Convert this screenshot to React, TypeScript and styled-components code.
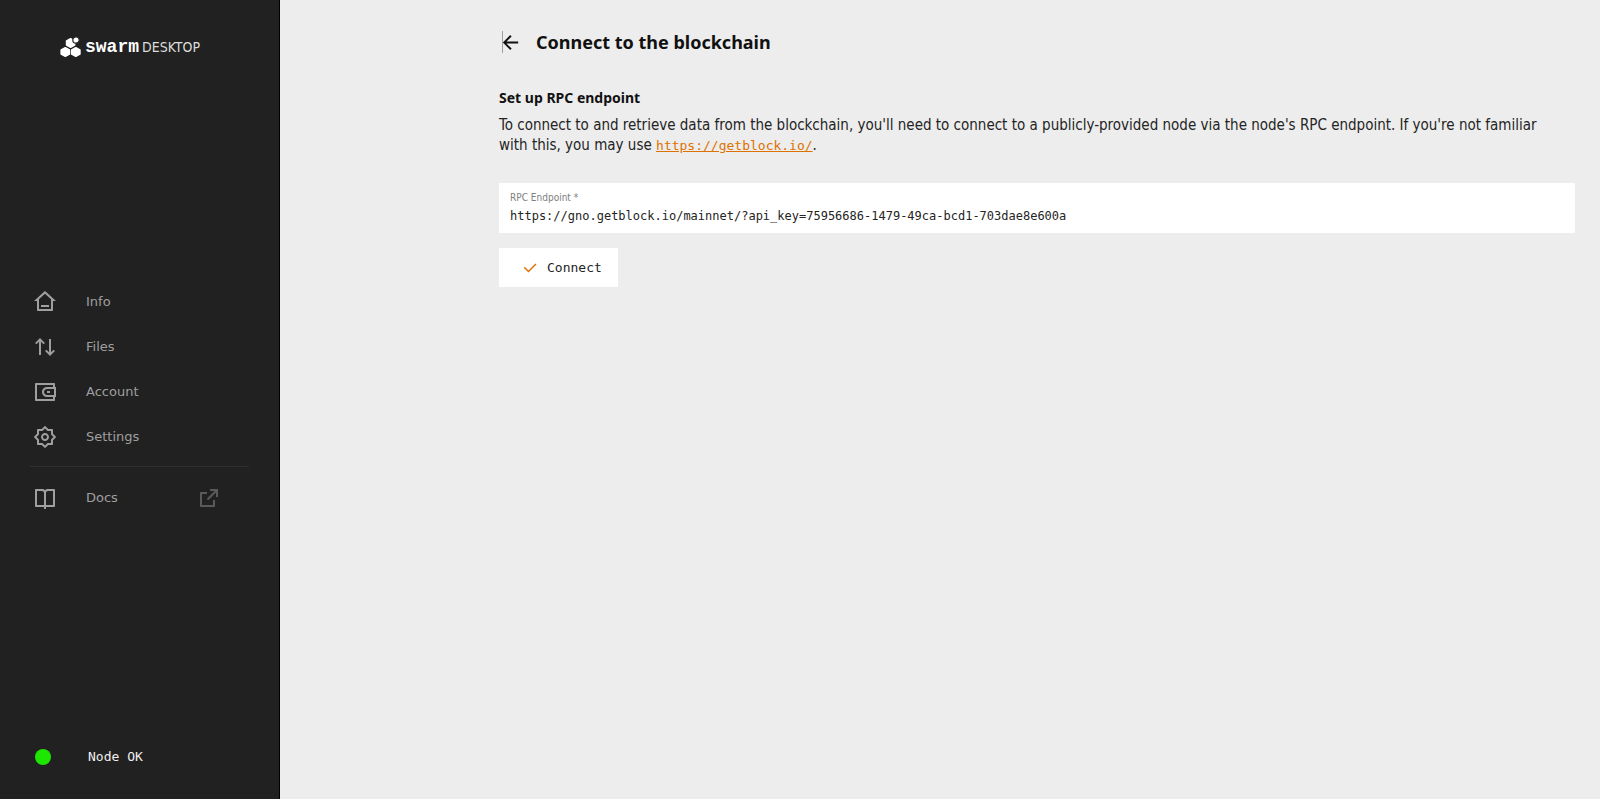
import React from 'react';
import styled, { createGlobalStyle } from 'styled-components';
import {
  RiHome3Line,
  RiArrowUpDownLine,
  RiWallet3Line,
  RiSettings2Line,
  RiBookOpenLine,
  RiExternalLinkLine,
  RiCheckLine,
  RiArrowLeftLine,
} from 'react-icons/ri';

const sans = '"DejaVu Sans", "Noto Sans", sans-serif';
const condensed = '"DejaVu Sans Condensed", "DejaVu Sans", sans-serif';
const heading = '"Noto Sans", "DejaVu Sans", sans-serif';
const mono = '"DejaVu Sans Mono", "Liberation Mono", monospace';

const GlobalStyle = createGlobalStyle`
  *, *::before, *::after { box-sizing: border-box; }
  body {
    margin: 0;
    background: #ededed;
    color: #242424;
    font: 13px/20px ${sans};
  }
`;

const Layout = styled.div`
  display: flex;
  min-height: 100vh;
`;

const Sidebar = styled.aside`
  flex: 0 0 280px;
  display: flex;
  flex-direction: column;
  justify-content: space-between;
  padding: 32px 30px 30px;
  background: #212121;
  border-right: 1px solid #000;
`;

const Logo = styled.a`
  display: flex;
  align-items: center;
  gap: 3px;
  height: 30px;
  padding-left: 30px;
  color: #fff;
  text-decoration: none;
`;

const LogoName = styled.span`
  font: 700 18px/24px "Liberation Mono", monospace;
`;

const LogoProduct = styled.span`
  font: 400 14px/24px ${condensed};
  color: #dcdcdc;
`;

const Nav = styled.nav`
  margin-bottom: 8px;
`;

const NavList = styled.ul`
  list-style: none;
  margin: 0;
  padding: 0;
`;

const NavLink = styled.a`
  display: flex;
  align-items: center;
  height: 45px;
  padding: 0 28px 0 3px;
  color: #9f9f9f;
  text-decoration: none;

  svg { flex: none; }
`;

const NavLabel = styled.span`
  flex: 1;
  padding-left: 29px;
`;

const ExternalMark = styled.span`
  display: flex;
  color: #5a5a5a;
`;

const Divider = styled.hr`
  margin: 7px 0 8px;
  border: 0;
  border-top: 1px solid #2f2f2f;
`;

const Status = styled.div`
  display: flex;
  align-items: center;
  gap: 37px;
  height: 24px;
  padding-left: 5px;
  color: #f0f0f0;
  font-family: ${mono};
`;

const StatusDot = styled.span`
  width: 16px;
  height: 16px;
  border-radius: 50%;
  background: #1de600;
`;

const Main = styled.main`
  flex: 1;
  min-width: 0;
  padding: 30px 25px 30px 219px;
`;

const Header = styled.header`
  display: flex;
  align-items: center;
  gap: 17px;
  height: 24px;
  margin-bottom: 34px;
`;

const BackButton = styled.button`
  display: flex;
  align-items: center;
  height: 22px;
  margin-left: 3px;
  padding: 0;
  border: 0;
  border-left: 1px solid #a0a0a0;
  background: none;
  color: #111;

  svg { margin: 0 -3px 0 -4px; }
`;

const Title = styled.h1`
  margin: 0;
  color: #111;
  font: 700 18px/24px ${heading};
`;

const Subtitle = styled.h2`
  margin: 0 0 7px;
  color: #111;
  font: 700 14px/20px ${heading};
`;

const Intro = styled.p`
  margin: 0 0 27px;
  padding-right: 24px;
  font: 400 15px/20px ${condensed};
`;

const TextLink = styled.a`
  color: #dd7200;
  font: 400 13px/20px ${mono};
  text-decoration: underline;
`;

const Field = styled.div`
  display: flex;
  flex-direction: column;
  height: 50px;
  margin-bottom: 15px;
  padding: 8px 11px;
  background: #fff;
`;

const FieldLabel = styled.label`
  color: #808080;
  font: 400 10px/14px ${condensed};
`;

const FieldInput = styled.input`
  width: 100%;
  height: 22px;
  padding: 0;
  border: 0;
  outline: 0;
  background: none;
  color: #242424;
  font: 400 12px/22px ${mono};
`;

const ConnectButton = styled.button`
  display: flex;
  align-items: center;
  gap: 8px;
  height: 39px;
  padding: 0 16px 0 22px;
  border: 0;
  background: #fff;
  color: #242424;
  font: 400 13px/20px ${mono};

  svg { color: #dd7200; }
`;

const items = [
  { label: 'Info', Icon: RiHome3Line },
  { label: 'Files', Icon: RiArrowUpDownLine },
  { label: 'Account', Icon: RiWallet3Line },
  { label: 'Settings', Icon: RiSettings2Line },
];

const SwarmMark = () => (
  <svg width="22" height="22" viewBox="0 0 22 22" fill="currentColor" stroke="currentColor" strokeLinejoin="round" aria-hidden="true">
    <path d="M5.3 11.7l4.1 2.2v4.2l-4.1 2.2-4.1-2.2v-4.2z" strokeWidth="1.6" />
    <path d="M15.8 11.7l4.1 2.2v4.2l-4.1 2.2-4.1-2.2v-4.2z" strokeWidth="1.6" />
    <path d="M10.6 2.7l4 2.2v4.1l-4 2.2-4-2.2V4.9z" strokeWidth="1.6" />
    <circle cx="16" cy="4" r="3.2" stroke="#212121" strokeWidth="1.2" />
  </svg>
);

export default function App() {
  return (
    <>
      <GlobalStyle />
      <Layout>
        <Sidebar>
          <Logo href="#">
            <SwarmMark />
            <LogoName>swarm</LogoName>
            <LogoProduct>DESKTOP</LogoProduct>
          </Logo>
          <Nav>
            <NavList>
              {items.map(({ label, Icon }) => (
                <li key={label}>
                  <NavLink href="#">
                    <Icon size={24} />
                    <NavLabel>{label}</NavLabel>
                  </NavLink>
                </li>
              ))}
            </NavList>
            <Divider />
            <NavLink href="#">
              <RiBookOpenLine size={24} />
              <NavLabel>Docs</NavLabel>
              <ExternalMark>
                <RiExternalLinkLine size={24} />
              </ExternalMark>
            </NavLink>
          </Nav>
          <Status>
            <StatusDot />
            <span>Node OK</span>
          </Status>
        </Sidebar>
        <Main>
          <Header>
            <BackButton type="button" aria-label="Back">
              <RiArrowLeftLine size={23} />
            </BackButton>
            <Title>Connect to the blockchain</Title>
          </Header>
          <Subtitle>Set up RPC endpoint</Subtitle>
          <Intro>
            To connect to and retrieve data from the blockchain, you'll need to connect to a publicly-provided node via
            the node's RPC endpoint. If you're not familiar with this, you may use{' '}
            <TextLink href="https://getblock.io/">https://getblock.io/</TextLink>.
          </Intro>
          <form onSubmit={e => e.preventDefault()}>
            <Field>
              <FieldLabel htmlFor="rpc-endpoint">RPC Endpoint *</FieldLabel>
              <FieldInput
                id="rpc-endpoint"
                type="text"
                required
                defaultValue="https://gno.getblock.io/mainnet/?api_key=75956686-1479-49ca-bcd1-703dae8e600a"
              />
            </Field>
            <ConnectButton type="submit">
              <RiCheckLine size={18} />
              Connect
            </ConnectButton>
          </form>
        </Main>
      </Layout>
    </>
  );
}
